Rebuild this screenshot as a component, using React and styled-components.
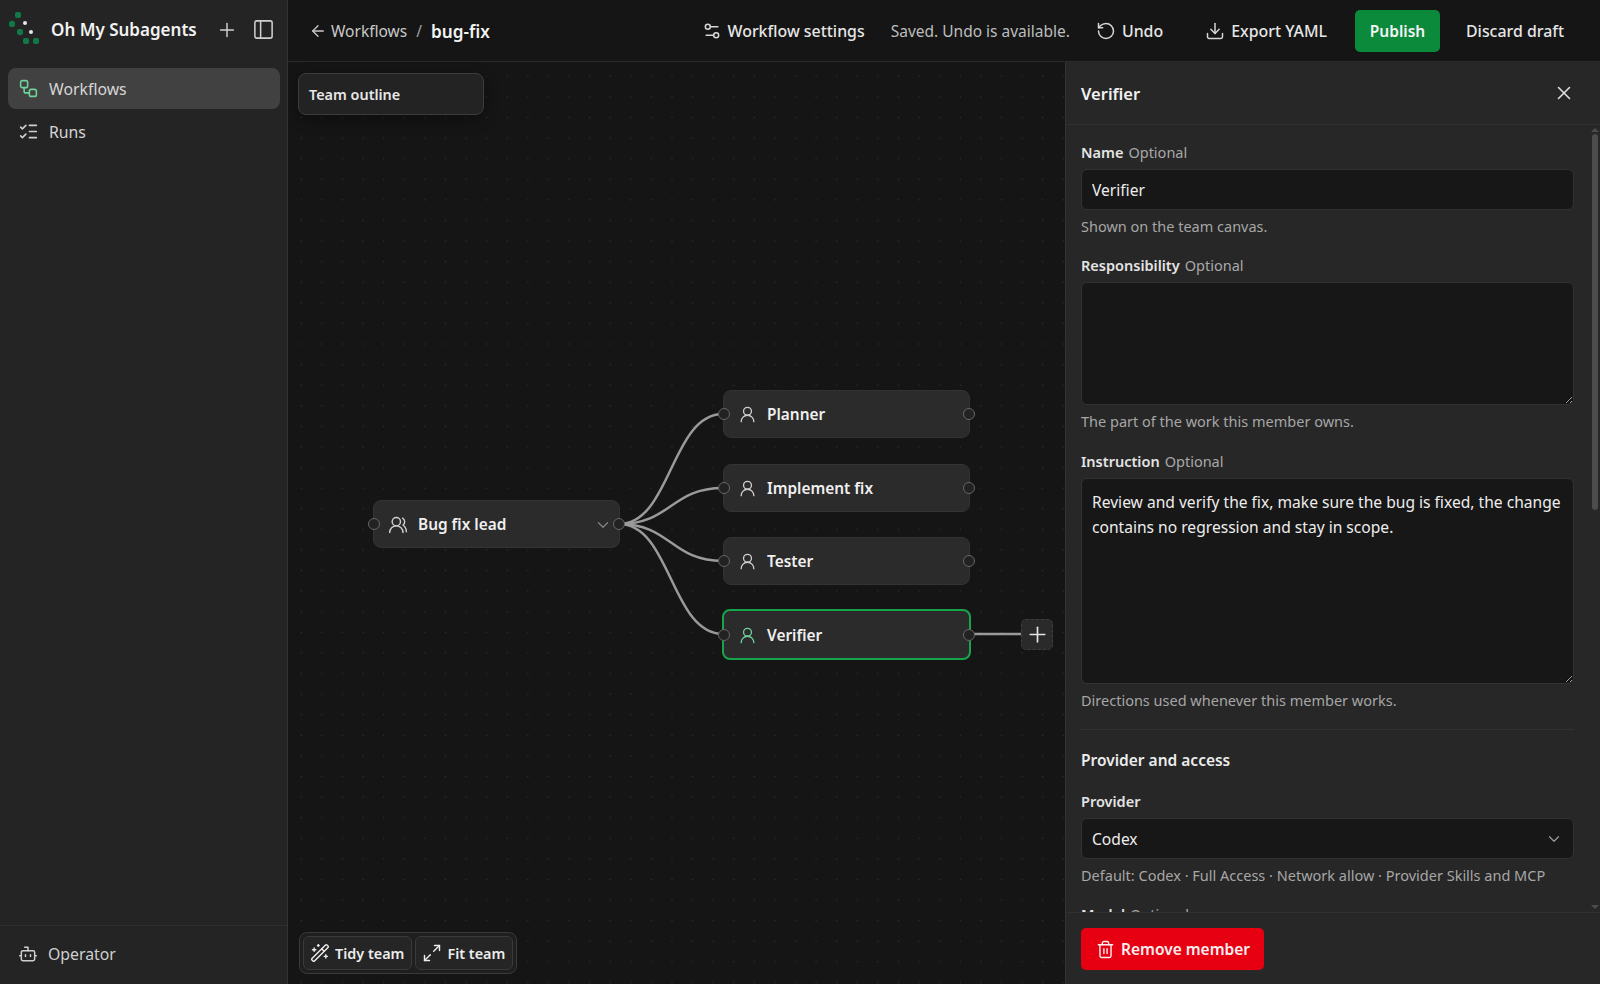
import React from "react";
import styled, { createGlobalStyle, css } from "styled-components";
import {
  Plus, PanelLeft, Workflow, ListChecks, Bot, ArrowLeft, Settings2, RotateCcw, Download,
  X, UsersRound, UserRound, ChevronDown, Trash2, WandSparkles, Maximize2,
} from "lucide-react";

const FONT = `"Noto Sans", "Open Sans", "Liberation Sans", sans-serif`;

const Global = createGlobalStyle`
  * { box-sizing: border-box; }
  html, body { margin: 0; padding: 0; height: 100%; background: #151515; }
  body { font-family: ${FONT}; color: #ededed; overflow: hidden; }
`;

const Shell = styled.div`
  display: flex;
  width: 1600px;
  height: 984px;
  overflow: hidden;
`;

const Sidebar = styled.aside`
  display: flex;
  flex-direction: column;
  flex: none;
  width: 288px;
  background: #242424;
  border-right: 1px solid #333;
`;
const Brand = styled.div`
  display: flex;
  align-items: center;
  height: 62px;
  padding: 0 12px 3px 9px;
`;
const BrandName = styled.div`
  flex: 1;
  margin-left: 9px;
  font-size: 17px;
  font-weight: 600;
  color: #f2f2f2;
`;
const BrandIcon = styled.span`
  display: flex;
  margin-left: 14px;
  color: #cfcfcf;
`;
const Nav = styled.nav`
  display: flex;
  flex-direction: column;
  gap: 2px;
  padding: 6px 7px 6px 8px;
  flex: 1;
`;
const NavItem = styled.div`
  display: flex;
  align-items: center;
  gap: 10px;
  height: 41px;
  padding: 0 10px;
  border-radius: 8px;
  font-size: 15.8px;
  color: #d6d6d6;
  background: ${p => (p.$active ? "#414141" : "transparent")};
  svg { color: ${p => (p.$active ? "#6fd29b" : "#cfcfcf")}; }
`;
const SideFoot = styled.div`
  display: flex;
  align-items: center;
  gap: 10px;
  height: 59px;
  padding: 0 18px 2px;
  border-top: 1px solid #2f2f2f;
  font-size: 15.8px;
  color: #cfcfcf;
`;

const Main = styled.div`
  display: flex;
  flex-direction: column;
  flex: 1;
  min-width: 0;
  height: 984px;
`;
const Header = styled.header`
  display: flex;
  align-items: center;
  flex: none;
  height: 62px;
  padding: 1px 36px 0 21px;
  background: #151515;
  border-bottom: 1px solid #2a2a2a;
`;
const Crumbs = styled.div`
  display: flex;
  align-items: center;
  flex: 1;
  font-size: 15.5px;
  color: #c9c9c9;
  svg { margin-right: 4px; }
`;
const Slash = styled.span`
  margin: 0 9px;
  color: #a0a0a0;
`;
const Current = styled.span`
  font-size: 17.2px;
  font-weight: 600;
  color: #f2f2f2;
`;
const HeadButton = styled.div`
  display: flex;
  align-items: center;
  gap: 6px;
  font-size: 15.9px;
  font-weight: 500;
  color: #e6e6e6;
  margin-left: ${p => p.$ml || 0}px;
  svg { color: #d6d6d6; }
`;
const Saved = styled.span`
  margin-left: 26px;
  font-size: 15.5px;
  color: #bdbdbd;
`;
const Publish = styled.div`
  display: flex;
  align-items: center;
  justify-content: center;
  width: 85px;
  height: 42px;
  margin-left: 28px;
  border-radius: 5px;
  background: #0b8a3c;
  color: #f4f4f4;
  font-size: 15.5px;
  font-weight: 600;
`;

const Body = styled.div`
  display: flex;
  flex: none;
  height: 922px;
`;
const Canvas = styled.div`
  position: relative;
  flex: 1;
  min-width: 0;
  overflow: hidden;
  background-color: #151515;
  background-image: radial-gradient(circle, #333 0.8px, transparent 1px);
  background-size: 20.6px 20.6px;
  background-position: 3px 4px;
`;
const Edges = styled.svg`
  position: absolute;
  inset: 0;
  width: 100%;
  height: 100%;
`;
const Outline = styled.div`
  position: absolute;
  left: 10px;
  top: 11px;
  display: flex;
  align-items: center;
  width: 186px;
  height: 42px;
  padding: 0 10px;
  border: 1px solid #3c3c3c;
  border-radius: 8px;
  background: #232323;
  box-shadow: 0 4px 14px rgba(0, 0, 0, 0.4);
  font-size: 14.4px;
  font-weight: 600;
  color: #e8e8e8;
`;
const Node = styled.div`
  position: absolute;
  display: flex;
  align-items: center;
  gap: 10px;
  padding: 1px 7px 0 14px;
  border-radius: 8px;
  background: #2b2b2b;
  border: 1px solid #333;
  font-size: 15.4px;
  font-weight: 600;
  color: #f0f0f0;
  svg { color: #cfcfcf; flex: none; }
  ${p => p.$selected && css`
    border: 2px solid #17a54b;
    svg { color: #6fd29b; }
  `}
`;
const NodeLabel = styled.span`
  flex: 1;
`;
const Caret = styled.span`
  display: flex;
  && svg { color: #858585; }
`;
const Handle = styled.span`
  position: absolute;
  top: 50%;
  width: 12px;
  height: 12px;
  margin-top: -6px;
  border-radius: 50%;
  background: #222;
  border: 1.5px solid #666;
  ${p => (p.$side === "left" ? "left: -6px;" : "right: -6px;")}
`;
const AddBtn = styled.div`
  position: absolute;
  left: 733px;
  top: 557px;
  display: flex;
  align-items: center;
  justify-content: center;
  width: 32px;
  height: 31px;
  border-radius: 5px;
  background: #2a2a2a;
  border: 1px dashed #3e3e3e;
  color: #e4e4e4;
`;
const Tools = styled.div`
  position: absolute;
  left: 11px;
  top: 870px;
  display: flex;
  gap: 3px;
  padding: 3px;
  border: 1px solid #3a3a3a;
  border-radius: 8px;
  background: #1f1f1f;
`;
const Tool = styled.div`
  display: flex;
  align-items: center;
  gap: 5px;
  height: 34px;
  padding: 0 7px 0 6px;
  border: 1px solid #3a3a3a;
  border-radius: 6px;
  background: #252525;
  font-size: 14.4px;
  font-weight: 600;
  color: #ececec;
`;

const Panel = styled.aside`
  display: flex;
  flex-direction: column;
  flex: none;
  width: 535px;
  height: 922px;
  background: #272727;
  border-left: 1px solid #333;
`;
const PanelHead = styled.div`
  display: flex;
  align-items: center;
  justify-content: space-between;
  flex: none;
  height: 63px;
  padding: 0 25px 0 15px;
  border-bottom: 1px solid #303030;
  font-size: 16.5px;
  font-weight: 600;
  color: #f2f2f2;
  svg { color: #e0e0e0; }
`;
const FormWrap = styled.div`
  position: relative;
  flex: none;
  height: 787px;
`;
const Form = styled.div`
  height: 787px;
  overflow: hidden;
  padding: 17px 26px 0 15px;
`;
const ScrollTrack = styled.div`
  position: absolute;
  top: 0;
  right: 0;
  bottom: 0;
  width: 12px;
`;
const ScrollThumb = styled.div`
  position: absolute;
  top: 9px;
  left: 4px;
  width: 6px;
  height: 376px;
  border-radius: 3px;
  background: #4c4c4c;
`;
const ScrollArrow = styled.div`
  position: absolute;
  left: 3px;
  width: 0;
  height: 0;
  border-left: 4px solid transparent;
  border-right: 4px solid transparent;
  ${p => (p.$up
    ? "top: 3px; border-bottom: 4px solid #4c4c4c;"
    : "bottom: 3px; border-top: 4px solid #4c4c4c;")}
`;
const Field = styled.div`
  margin-bottom: ${p => p.$mb ?? 19}px;
`;
const Label = styled.div`
  height: 20px;
  margin-bottom: 7px;
  line-height: 20px;
  font-size: 14.5px;
  font-weight: 600;
  color: #e4e4e4;
`;
const Opt = styled.span`
  margin-left: 5px;
  font-weight: 400;
  color: #a9a9a9;
`;
const controlBox = css`
  width: 100%;
  border: 1px solid #323232;
  border-radius: 6px;
  background: #171717;
  color: #ededed;
  font-family: ${FONT};
  font-size: 15.6px;
  padding: 0 10px;
  outline: none;
`;
const Input = styled.input`
  ${controlBox}
  display: block;
  height: 41px;
`;
const TextArea = styled.textarea`
  ${controlBox}
  display: block;
  height: ${p => p.$h}px;
  padding-top: 11px;
  line-height: 25px;
  resize: vertical;
`;
const Select = styled.div`
  ${controlBox}
  display: flex;
  align-items: center;
  justify-content: space-between;
  height: 41px;
  svg { color: #9a9a9a; }
`;
const Hint = styled.div`
  margin-top: 6px;
  line-height: 20px;
  font-size: 14.5px;
  color: #a6a6a6;
`;
const Divider = styled.hr`
  margin: 19px 0 19px;
  border: 0;
  border-top: 1px solid #323232;
`;
const Section = styled.div`
  margin-bottom: 20px;
  line-height: 22px;
  font-size: 15.5px;
  font-weight: 600;
  color: #ececec;
`;
const PanelFoot = styled.div`
  flex: none;
  height: 72px;
  padding: 15px 15px;
  border-top: 1px solid #303030;
  background: #272727;
`;
const Danger = styled.div`
  display: inline-flex;
  align-items: center;
  gap: 6px;
  height: 42px;
  padding: 0 14px 0 15px;
  border-radius: 5px;
  background: #e60012;
  color: #f8eeee;
  font-size: 15.5px;
  font-weight: 600;
`;
const Logo = styled.svg`
  flex: none;
`;

const LEAD_Y = 462;
const members = [
  { name: "Planner", left: 435, width: 247, top: 328, height: 48, y: 352 },
  { name: "Implement fix", left: 435, width: 247, top: 402, height: 48, y: 426 },
  { name: "Tester", left: 435, width: 247, top: 475, height: 48, y: 499 },
  { name: "Verifier", left: 434, width: 249, top: 547, height: 51, y: 572, selected: true },
];

function edgePath(y) {
  const x0 = 331, x1 = 435;
  return `M${x0} ${LEAD_Y} C${x0 + 52} ${LEAD_Y} ${x1 - 52} ${y} ${x1} ${y}`;
}

export default function App() {
  return (
    <>
      <Global />
      <Shell>
        <Sidebar>
          <Brand>
            <Logo width="33" height="48" viewBox="9 6 33 48">
              <g fill="#0f7a48">
                <rect x="15" y="12" width="6" height="6" rx="2" />
                <rect x="9" y="21" width="6" height="6" rx="2" />
                <rect x="17" y="29" width="6" height="6" rx="2" />
                <rect x="23" y="38" width="6" height="6" rx="2" />
                <rect x="33" y="38" width="6" height="6" rx="2" />
              </g>
              <circle cx="25" cy="23" r="2" fill="#e8e8e8" />
              <circle cx="31" cy="32" r="2" fill="#e8e8e8" />
            </Logo>
            <BrandName>Oh My Subagents</BrandName>
            <BrandIcon><Plus size={22} strokeWidth={1.6} /></BrandIcon>
            <BrandIcon><PanelLeft size={23} strokeWidth={1.6} /></BrandIcon>
          </Brand>
          <Nav>
            <NavItem $active><Workflow size={21} strokeWidth={1.8} />Workflows</NavItem>
            <NavItem><ListChecks size={21} strokeWidth={1.8} />Runs</NavItem>
          </Nav>
          <SideFoot><Bot size={20} strokeWidth={1.8} />Operator</SideFoot>
        </Sidebar>

        <Main>
          <Header>
            <Crumbs>
              <ArrowLeft size={18} strokeWidth={1.8} />Workflows<Slash>/</Slash><Current>bug-fix</Current>
            </Crumbs>
            <HeadButton><Settings2 size={20} strokeWidth={1.8} />Workflow settings</HeadButton>
            <Saved>Saved. Undo is available.</Saved>
            <HeadButton $ml={26}><RotateCcw size={20} strokeWidth={1.8} />Undo</HeadButton>
            <HeadButton $ml={42}><Download size={20} strokeWidth={1.8} />Export YAML</HeadButton>
            <Publish>Publish</Publish>
            <HeadButton $ml={26}>Discard draft</HeadButton>
          </Header>

          <Body>
            <Canvas>
              <Edges>
                <g fill="none" stroke="#9a9a9a" strokeWidth="2.5">
                  {members.map(m => <path key={m.name} d={edgePath(m.y)} />)}
                  <path d="M681 572 L733 572" />
                </g>
              </Edges>
              <Outline>Team outline</Outline>
              <Node style={{ left: 85, top: 438, width: 247, height: 48 }}>
                <Handle $side="left" />
                <UsersRound size={20} strokeWidth={1.7} />
                <NodeLabel>Bug fix lead</NodeLabel>
                <Caret><ChevronDown size={18} strokeWidth={1.6} /></Caret>
                <Handle $side="right" />
              </Node>
              {members.map(m => (
                <Node key={m.name} $selected={m.selected} style={{ left: m.left, top: m.top, width: m.width, height: m.height }}>
                  <Handle $side="left" />
                  <UserRound size={19} strokeWidth={1.7} />
                  <NodeLabel>{m.name}</NodeLabel>
                  <Handle $side="right" />
                </Node>
              ))}
              <AddBtn><Plus size={25} strokeWidth={1.6} /></AddBtn>
              <Tools>
                <Tool><WandSparkles size={20} strokeWidth={1.7} />Tidy team</Tool>
                <Tool><Maximize2 size={20} strokeWidth={1.7} />Fit team</Tool>
              </Tools>
            </Canvas>

            <Panel>
              <PanelHead>Verifier<X size={22} strokeWidth={1.7} /></PanelHead>
              <FormWrap>
                <Form>
                  <Field>
                    <Label>Name<Opt>Optional</Opt></Label>
                    <Input defaultValue="Verifier" readOnly />
                    <Hint>Shown on the team canvas.</Hint>
                  </Field>
                  <Field $mb={20}>
                    <Label>Responsibility<Opt>Optional</Opt></Label>
                    <TextArea $h={123} readOnly />
                    <Hint>The part of the work this member owns.</Hint>
                  </Field>
                  <Field $mb={0}>
                    <Label>Instruction<Opt>Optional</Opt></Label>
                    <TextArea
                      $h={206}
                      readOnly
                      defaultValue="Review and verify the fix, make sure the bug is fixed, the change contains no regression and stay in scope."
                    />
                    <Hint>Directions used whenever this member works.</Hint>
                  </Field>
                  <Divider />
                  <Section>Provider and access</Section>
                  <Field>
                    <Label>Provider</Label>
                    <Select>Codex<ChevronDown size={18} strokeWidth={1.6} /></Select>
                    <Hint>Default: Codex · Full Access · Network allow · Provider Skills and MCP</Hint>
                  </Field>
                  <Field>
                    <Label>Model<Opt>Optional</Opt></Label>
                  </Field>
                </Form>
                <ScrollTrack>
                  <ScrollArrow $up />
                  <ScrollThumb />
                  <ScrollArrow />
                </ScrollTrack>
              </FormWrap>
              <PanelFoot>
                <Danger><Trash2 size={19} strokeWidth={1.8} />Remove member</Danger>
              </PanelFoot>
            </Panel>
          </Body>
        </Main>
      </Shell>
    </>
  );
}
